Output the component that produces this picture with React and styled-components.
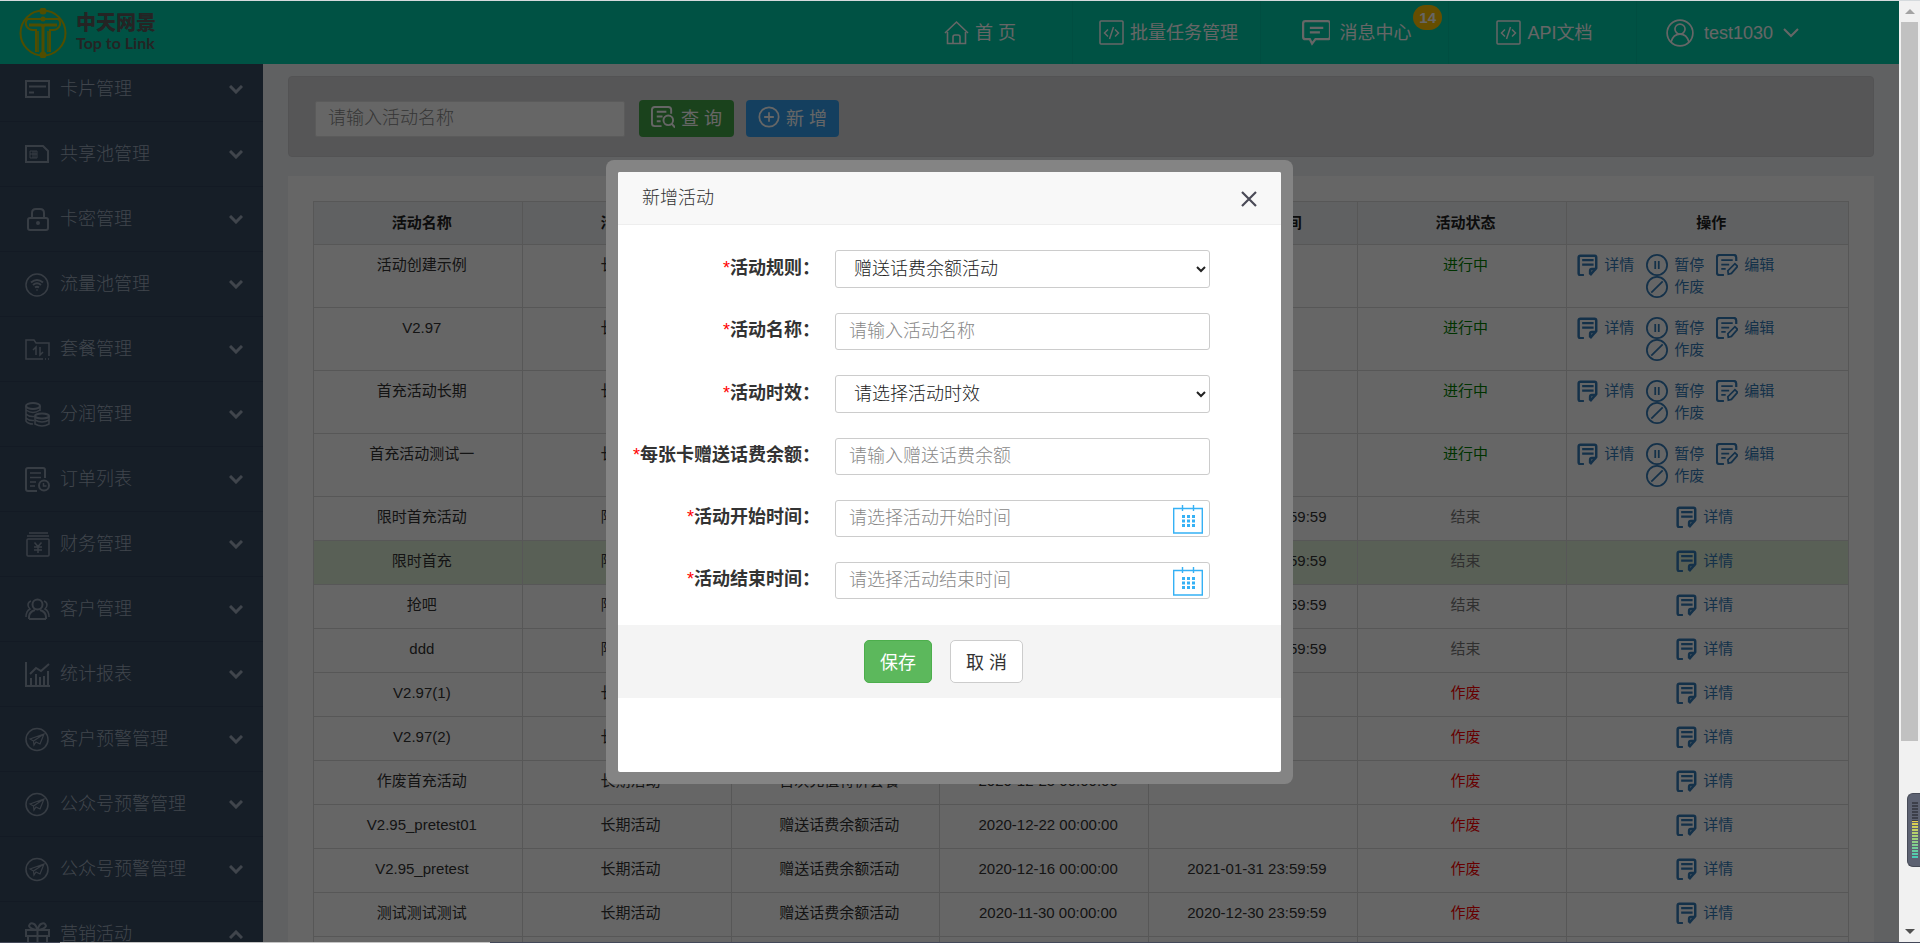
import React from 'react'
import styled, { createGlobalStyle } from 'styled-components'

const menus = [
  { name: '卡片管理', icon: 'card' },
  { name: '共享池管理', icon: 'sim' },
  { name: '卡密管理', icon: 'lock' },
  { name: '流量池管理', icon: 'wifi' },
  { name: '套餐管理', icon: 'folder' },
  { name: '分润管理', icon: 'coins' },
  { name: '订单列表', icon: 'order' },
  { name: '财务管理', icon: 'money' },
  { name: '客户管理', icon: 'users' },
  { name: '统计报表', icon: 'chart' },
  { name: '客户预警管理', icon: 'plane' },
  { name: '公众号预警管理', icon: 'plane' },
  { name: '公众号预警管理', icon: 'plane' },
  { name: '营销活动', icon: 'gift', open: true },
]

const columns = ['活动名称', '活动类型', '活动规则', '活动开始时间', '活动结束时间', '活动状态', '操作']

const GIVE = '赠送话费余额活动'
const FIRST = '首次充值特价套餐'

const rows = [
  ['活动创建示例', '长期活动', GIVE, '2021-01-20 00:00:00', '', '进行中'],
  ['V2.97', '长期活动', GIVE, '2021-01-18 00:00:00', '', '进行中'],
  ['首充活动长期', '长期活动', FIRST, '2021-01-12 00:00:00', '', '进行中'],
  ['首充活动测试一', '长期活动', FIRST, '2021-01-08 00:00:00', '', '进行中'],
  ['限时首充活动', '限时活动', FIRST, '2021-01-06 00:00:00', '2021-01-10 23:59:59', '结束'],
  ['限时首充', '限时活动', FIRST, '2021-01-05 00:00:00', '2021-01-08 23:59:59', '结束'],
  ['抢吧', '限时活动', FIRST, '2020-12-30 00:00:00', '2020-12-31 23:59:59', '结束'],
  ['ddd', '限时活动', FIRST, '2020-12-28 00:00:00', '2020-12-30 23:59:59', '结束'],
  ['V2.97(1)', '长期活动', GIVE, '2020-12-28 00:00:00', '', '作废'],
  ['V2.97(2)', '长期活动', GIVE, '2020-12-28 00:00:00', '', '作废'],
  ['作废首充活动', '长期活动', FIRST, '2020-12-25 00:00:00', '', '作废'],
  ['V2.95_pretest01', '长期活动', GIVE, '2020-12-22 00:00:00', '', '作废'],
  ['V2.95_pretest', '长期活动', GIVE, '2020-12-16 00:00:00', '2021-01-31 23:59:59', '作废'],
  ['测试测试测试', '长期活动', GIVE, '2020-11-30 00:00:00', '2020-12-30 23:59:59', '作废'],
  ['测试活动', '长期活动', GIVE, '2020-11-27 00:00:00', '2020-12-30 23:59:59', '作废'],
]

const statusColor = { 进行中: 'green', 结束: '#777', 作废: 'red' }

const shapes = {
  card: (
    <>
      <rect x='1' y='4' width='23' height='16' />
      <path d='M4 9.5h17M4 15.5h5' />
    </>
  ),
  sim: (
    <>
      <path d='M1 4h17l5 5v11H1z' />
      <path d='M5 9h7v7H5zM8 9v7M10 9v7M5 12h7' strokeWidth='1' />
    </>
  ),
  lock: (
    <>
      <rect x='3' y='11' width='20' height='12' rx='2' />
      <path d='M7 11V6q0-4 4-4h4q4 0 4 4v5' />
      <circle cx='13' cy='16' r='1' fill='currentColor' />
    </>
  ),
  wifi: (
    <>
      <circle cx='12' cy='13' r='11' strokeWidth='1.5' />
      <path d='M6 10.5q6-5 12 0M8 13q4-3.5 8 0M10 15.500q2-1.500 4 0M12 17.500v1' />
    </>
  ),
  folder: (
    <>
      <path d='M18 22H1V3h8l2 3h13v13M20 22h1M23 22h1' strokeWidth='1.5' />
      <path d='M11 18v-8l-3 3M15 10v8l3-3' strokeWidth='1.5' />
    </>
  ),
  coins: (
    <>
      <ellipse cx='8' cy='4' rx='7' ry='3' />
      <path d='M1 4v15q2 3 7 3M15 4v5M1 8q7 5 14 0M1 12q3 3 8 2.500M1 16q3 3 8 2.500' strokeWidth='1.500' />
      <ellipse cx='17' cy='14' rx='7' ry='2.500' />
      <path d='M10 14v8q7 4 14 0v-8M10 18q7 4 14 0' strokeWidth='1.500' />
    </>
  ),
  order: (
    <>
      <path d='M12 24H3q-2 0-2-2V3q0-2 2-2h15q2 0 2 2v8' />
      <path d='M5 6h11M5 10.500h11M5 15h6M5 19h5' strokeWidth='1.500' />
      <circle cx='19' cy='18.500' r='5' />
      <path d='M18.500 16v3h3' strokeWidth='1.500' />
    </>
  ),
  money: (
    <>
      <path d='M4 1h19M2 4h22' strokeWidth='1.500' />
      <rect x='2' y='7' width='22' height='17' rx='1' strokeWidth='1.500' />
      <path d='M9.500 10.500l3.500 4 3.500-4M13 14.500V21M9 15h8M9 18h8' strokeWidth='1.500' />
    </>
  ),
  users: (
    <>
      <circle cx='12.500' cy='7.500' r='5' />
      <path d='M4 22v-2q0-5 6-7M21 22v-2q0-5-6-7M4 22h17' />
      <path d='M6 4q-3 1-3 4 0 2 2 4-4 2-4 8M19 4q3 1 3 4 0 2-2 4 4 2 4 8' strokeWidth='1.500' />
    </>
  ),
  chart: (
    <>
      <path d='M1 0v24h24' />
      <path d='M6 23v-7M11 23V12M15 23v-8M19 23v-9M23 23V9' />
      <path d='M5 12l6-6 5 3 8-7' />
    </>
  ),
  plane: (
    <>
      <circle cx='12' cy='12.500' r='11' strokeWidth='1.500' />
      <path d='M5 12l14-5-4 10-4-2-2 3-.5-4zM8.500 14L19 7' strokeWidth='1.200' />
    </>
  ),
  gift: (
    <>
      <path d='M1 8h23v6H1zM3 14v10h19V14M12.500 8v16' />
      <path d='M12.500 8Q5 7 4 4q1-4 5-2 2 1 3.500 6Q14 3 16 2q4-2 5 2-1 3-8.500 4' />
    </>
  ),
  home: (
    <>
      <path d='M1 13L12.500 2 24 13' strokeWidth='1.600' />
      <path d='M3.500 12v11.500h18V12M9 23v-6q0-2 2-2h3q2 0 2 2v6' strokeWidth='1.600' />
    </>
  ),
  code: (
    <>
      <rect x='1' y='1' width='23' height='23' rx='1' strokeWidth='1.500' />
      <path d='M9 9.500L5.500 13 9 16.500M16 9.500l3.500 3.500-3.500 3.500M14.500 7l-4 12' strokeWidth='1.500' />
    </>
  ),
  message: (
    <>
      <path d='M3 2h20q2 0 2 2v12q0 2-2 2H12l-3 4-2-4H3q-2 0-2-2V4q0-2 2-2z' />
      <path d='M7 8h12M7 12h9' />
    </>
  ),
  person: (
    <>
      <circle cx='12.500' cy='12.500' r='11.500' strokeWidth='1.500' />
      <circle cx='12.500' cy='9' r='4.500' strokeWidth='1.500' />
      <path d='M4.500 20.500q2-7 8-7t8 7' strokeWidth='1.500' />
    </>
  ),
  query: (
    <>
      <path d='M11 22H4q-3 0-3-3V5q0-3 3-3h14q3 0 3 3v4' />
      <path d='M6 7h10M6 12h6M6 17h4' />
      <circle cx='18' cy='16' r='5' />
      <path d='M21.500 19.500l3.500 4' />
    </>
  ),
  plus: (
    <>
      <circle cx='12.500' cy='12.500' r='11' />
      <path d='M12.500 7v11M7 12.500h11' />
    </>
  ),
  detail: (
    <>
      <path d='M9 24H5q-2 0-2-2V4q0-2 2-2h16q2 0 2 2v12l-7 8' strokeWidth='2.800' />
      <path d='M7 7h13M7 12h13' strokeWidth='2.500' />
      <path d='M16 23v-4q0-2 2-2h5' strokeWidth='2.800' />
    </>
  ),
  pause: (
    <>
      <circle cx='12.500' cy='12.500' r='11.500' />
      <path d='M10.500 8v9M14.500 8v9' />
    </>
  ),
  edit: (
    <>
      <path d='M9 24H4q-3 0-3-3V4q0-3 3-3h16q3 0 3 3v4' strokeWidth='2.500' />
      <path d='M6 7h13M6 12h9M6 17h5' />
      <path d='M14 23l-.5-4 8-8 3 3-7 8z' />
    </>
  ),
  ban: (
    <>
      <circle cx='12.500' cy='12.500' r='11.500' />
      <path d='M6 19L19 6' />
    </>
  ),
}

function Icon({ name, size = 25 }) {
  return (
    <Svg width={size} height={size} viewBox='0 0 25 25' aria-hidden='true'>
      {shapes[name]}
    </Svg>
  )
}

function Logo() {
  return (
    <Brand href='#'>
      <Svg width='50' height='50' viewBox='0 0 50 50' aria-hidden='true'>
        <circle cx='25' cy='25' r='22.500' />
        <circle cx='25' cy='3' r='2.500' fill='currentColor' />
        <circle cx='25' cy='47' r='2.500' fill='currentColor' />
        <circle cx='25' cy='11' r='1.500' fill='currentColor' />
        <path d='M7 11h36M10 11q-4 3-1 8 2 3 6 3h3v22M40 11q4 3 1 8-2 3-6 3h-3v22' />
        <path d='M11 17h12q2 0 2 3v24M39 17H27q-2 0-2 3' strokeWidth='3' />
        <path d='M20 44V23M30 44V23' strokeWidth='1.500' />
      </Svg>
      <BrandText>
        <strong>中天网景</strong>
        <span>Top to Link</span>
      </BrandText>
    </Brand>
  )
}

function Calendar() {
  return (
    <CalendarSvg width='30' height='30' viewBox='0 0 30 30' aria-hidden='true'>
      <path d='M.7 4.500h28.600v24.500H.7z' />
      <path d='M9.500 1v6M20.500 1v6' />
      {[12, 16.500, 21].map(y =>
        [10, 15, 20].map(x => <rect key={x + '-' + y} x={x - 1} y={y - 1} width='3' height='3' />)
      )}
    </CalendarSvg>
  )
}

function Action({ icon, children }) {
  return (
    <ActionLink href='#'>
      <Icon name={icon} size={22} />
      {children}
    </ActionLink>
  )
}

function Header() {
  return (
    <Top>
      <Logo />
      <Nav>
        <NavItem href='#'><Icon name='home' />首 页</NavItem>
        <NavItem href='#'><Icon name='code' />批量任务管理</NavItem>
        <NavItem href='#' $gap={10}>
          <Icon name='message' size={28} />
          消息中心
          <Badge>14</Badge>
        </NavItem>
        <NavItem href='#'><Icon name='code' />API文档</NavItem>
        <NavItem href='#' $gap={10}>
          <Icon name='person' size={28} />
          test1030
          <Svg width='16' height='10' viewBox='0 0 16 10' aria-hidden='true'>
            <path d='M1 1l7 7 7-7' />
          </Svg>
        </NavItem>
      </Nav>
    </Top>
  )
}

function Sidebar() {
  return (
    <Side>
      <MenuList>
        {menus.map((m, i) => (
          <li key={i}>
            <MenuLink href='#'>
              <MenuIcon><Icon name={m.icon} /></MenuIcon>
              {m.name}
              <Arrow width='14' height='9' viewBox='0 0 14 9' aria-hidden='true'>
                <path d={m.open ? 'M1 8l6-6 6 6' : 'M1 1l6 6 6-6'} />
              </Arrow>
            </MenuLink>
          </li>
        ))}
      </MenuList>
    </Side>
  )
}

function ActivityTable() {
  return (
    <Table>
      <colgroup>
        {columns.slice(0, 6).map(c => <NormalCol key={c} />)}
        <col />
      </colgroup>
      <thead>
        <tr>{columns.map(c => <th key={c}>{c}</th>)}</tr>
      </thead>
      <tbody>
        {rows.map((row, i) => {
          const running = row[5] === '进行中'
          return (
            <Row key={row[0]} $active={i === 5}>
              {row.slice(0, 5).map((text, j) => <td key={j}>{text}</td>)}
              <td><Status $color={statusColor[row[5]]}>{row[5]}</Status></td>
              <ActionCell>
                <Actions $multi={running}>
                  <Action icon='detail'>详情</Action>
                  {running && <Action icon='pause'>暂停</Action>}
                  {running && <Action icon='edit'>编辑</Action>}
                  {running && <Action icon='ban'>作废</Action>}
                </Actions>
              </ActionCell>
            </Row>
          )
        })}
      </tbody>
    </Table>
  )
}

function Field({ id, label, children }) {
  return (
    <FieldRow>
      <Label htmlFor={id}><i>*</i>{label}：</Label>
      <Control>{children}</Control>
    </FieldRow>
  )
}

function ActivityDialog() {
  return (
    <Dialog role='dialog' aria-labelledby='dialog-title'>
      <DialogInner>
        <DialogHead>
          <h2 id='dialog-title'>新增活动</h2>
          <Close type='button' aria-label='关闭'>
            <svg width='16' height='16' viewBox='0 0 16 16' aria-hidden='true'>
              <path d='M1 1l14 14M15 1L1 15' stroke='#4a4a57' strokeWidth='2.200' />
            </svg>
          </Close>
        </DialogHead>
        <Form>
          <Field id='rule' label='活动规则'>
            <Select id='rule'><option>赠送话费余额活动</option></Select>
          </Field>
          <Field id='name' label='活动名称'>
            <Input id='name' placeholder='请输入活动名称' />
          </Field>
          <Field id='term' label='活动时效'>
            <Select id='term'><option>请选择活动时效</option></Select>
          </Field>
          <Field id='amount' label='每张卡赠送话费余额'>
            <Input id='amount' placeholder='请输入赠送话费余额' />
          </Field>
          <Field id='start' label='活动开始时间'>
            <Input id='start' placeholder='请选择活动开始时间' />
            <Calendar />
          </Field>
          <Field id='end' label='活动结束时间'>
            <Input id='end' placeholder='请选择活动结束时间' />
            <Calendar />
          </Field>
        </Form>
        <DialogFoot>
          <DialogButton type='button' $primary>保存</DialogButton>
          <DialogButton type='button'>取 消</DialogButton>
        </DialogFoot>
      </DialogInner>
    </Dialog>
  )
}

function App() {
  return (
    <Shell>
      <GlobalStyle />
      <Window>
        <Page>
          <Header />
          <Body>
            <Sidebar />
            <Main>
              <SearchBar>
                <SearchInput placeholder='请输入活动名称' aria-label='活动名称' />
                <ToolButton type='button' $color='#43a547'><Icon name='query' size={24} />查 询</ToolButton>
                <ToolButton type='button' $color='#339fee'><Icon name='plus' size={22} />新 增</ToolButton>
              </SearchBar>
              <Card>
                <ActivityTable />
              </Card>
            </Main>
          </Body>
          <Mask>
            <ActivityDialog />
          </Mask>
        </Page>
        <ScrollBar>
          <ScrollArrow />
          <Track><Thumb /></Track>
          <ScrollArrow $down />
        </ScrollBar>
      </Window>
      <BottomLine><span /></BottomLine>
      <Meter><Level /></Meter>
    </Shell>
  )
}

const GlobalStyle = createGlobalStyle`
  *{
    box-sizing: border-box;
  }

  body{
    margin: 0;
    overflow: hidden;
    color: #333;
    font-family: "Liberation Sans", "Noto Sans CJK SC", sans-serif;
    font-size: 15px;
    line-height: 22px;
  }

  a{
    text-decoration: none;
  }

  input, select, button{
    font-family: inherit;
    font-size: 18px;
  }
`

const Svg = styled.svg`
  flex: none;
  fill: none;
  stroke: currentColor;
  stroke-width: 2;
`

const Shell = styled.div`
  display: flex;
  flex-direction: column;
  height: 100vh;
  border-top: 1px solid #d5dadd;
`

const Window = styled.div`
  display: flex;
  flex: 1;
  min-height: 0;
`

const Page = styled.div`
  position: relative;
  display: flex;
  flex-direction: column;
  flex: 1;
  min-width: 0;
  overflow: hidden;
  background: #f0f2f5;
`

const Top = styled.header`
  display: flex;
  justify-content: space-between;
  flex: none;
  height: 63px;
  padding-right: 75px;
  background: #00cdaa;
`

const Brand = styled.a`
  display: flex;
  align-items: center;
  gap: 8px;
  padding-left: 18px;
  color: #c8c000;
`

const BrandText = styled.span`
  display: flex;
  flex-direction: column;
  color: #5a5a5a;

  strong{
    font-size: 20px;
    font-weight: 900;
    line-height: 20px;
  }

  span{
    font-family: Lato, sans-serif;
    font-size: 16px;
    font-weight: 700;
    line-height: 20px;
  }
`

const Nav = styled.nav`
  display: flex;
`

const NavItem = styled.a`
  position: relative;
  display: flex;
  align-items: center;
  justify-content: center;
  gap: ${p => p.$gap || 6}px;
  width: 188px;
  padding-left: 4px;
  color: #fff;
  font-size: 18px;

  & + &{
    border-left: 1px solid #00c4a2;
  }
`

const Badge = styled.span`
  position: absolute;
  top: 4px;
  right: 6px;
  padding: 0 6px;
  border-radius: 13px;
  background: #ffc400;
  font-size: 15px;
  font-weight: bold;
  line-height: 25px;
`

const Body = styled.div`
  display: flex;
  flex: 1;
  min-height: 0;
`

const Side = styled.aside`
  flex: none;
  width: 263px;
  overflow: hidden;
  background: #374b62;
`

const MenuList = styled.ul`
  margin: -7px 0 0;
  padding: 0;
  list-style: none;
`

const MenuLink = styled.a`
  display: flex;
  align-items: center;
  height: 65px;
  padding: 0 20px 0 25px;
  border-bottom: 1px solid #30425a;
  color: #a0adbe;
  font-size: 18px;
  font-weight: 300;
`

const MenuIcon = styled.span`
  display: flex;
  margin-right: 10px;
  color: #8a98aa;
`

const Arrow = styled.svg`
  margin-left: auto;
  fill: none;
  stroke: #a0adbe;
  stroke-width: 3;
`

const Main = styled.main`
  display: flex;
  flex-direction: column;
  flex: 1;
  min-width: 0;
  padding: 12px 25px 0;
  overflow: hidden;
`

const SearchBar = styled.div`
  display: flex;
  align-items: center;
  gap: 12px;
  flex: none;
  padding: 23px 26px 19px;
  border: 1px solid #d0d0d3;
  border-radius: 4px;
  background: #d8d8da;
`

const SearchInput = styled.input`
  width: 310px;
  height: 36px;
  margin-right: 2px;
  padding: 0 12px;
  border: 1px solid #e4e4e4;
  border-radius: 2px;
  background: #fff;
  font-weight: 300;

  &::placeholder{
    color: #888;
  }
`

const ToolButton = styled.button`
  display: flex;
  align-items: center;
  gap: 6px;
  height: 37px;
  padding: 0 12px 3px;
  border: 0;
  border-radius: 4px;
  background: ${p => p.$color};
  color: #fff;
`

const Card = styled.section`
  flex: none;
  margin-top: 19px;
  padding: 25px;
  background: #fff;
`

const Table = styled.table`
  width: 100%;
  border-collapse: collapse;
  table-layout: fixed;
  text-align: center;

  th, td{
    padding: 9px 5px 9px 13px;
    border: 1px solid #d9d9d9;
    vertical-align: top;
  }

  th{
    padding-top: 10px;
    padding-bottom: 10px;
    background: #f0f2f5;
    color: #222;
  }

  td{
    height: 44px;
  }
`

const NormalCol = styled.col`
  width: 13.6%;
`

const Row = styled.tr`
  background: ${p => p.$active ? '#dff0d8' : '#fff'};
`

const Status = styled.span`
  color: ${p => p.$color};
`

const ActionCell = styled.td`
  && {
    padding: 9px 12px 9px 6px;
  }
`

const Actions = styled.div`
  display: flex;
  flex-wrap: wrap;
  justify-content: center;
  column-gap: 12px;
  width: ${p => p.$multi ? '78%' : '100%'};
`

const ActionLink = styled.a`
  display: flex;
  align-items: center;
  gap: 6px;
  color: #337ab7;
`

const Mask = styled.div`
  position: absolute;
  inset: 0;
  padding-top: 159px;
  background: rgba(0, 0, 0, .6);
`

const Dialog = styled.div`
  width: 37%;
  min-width: 660px;
  max-width: 687px;
  margin: 0 auto;
  padding: 12px;
  border-radius: 8px;
  background: #848484;
`

const DialogInner = styled.div`
  padding-bottom: 74px;
  border-radius: 2px;
  background: #fff;
  overflow: hidden;
`

const DialogHead = styled.div`
  display: flex;
  align-items: center;
  justify-content: space-between;
  height: 53px;
  padding: 0 24px;
  border-bottom: 1px solid #eee;
  background: #f8f8f8;

  h2{
    margin: 0;
    font-size: 18px;
    font-weight: 300;
  }
`

const Close = styled.button`
  display: flex;
  padding: 2px 0 0;
  border: 0;
  background: none;
`

const Form = styled.form`
  display: flex;
  flex-direction: column;
  gap: 25px;
  padding: 25px 71px 26px 0;
`

const FieldRow = styled.div`
  display: flex;
  align-items: center;
  justify-content: flex-end;
  gap: 15px;
`

const Label = styled.label`
  padding-bottom: 3px;
  font-size: 18px;
  font-weight: bold;

  i{
    color: red;
    font-style: normal;
    font-weight: normal;
  }
`

const Control = styled.div`
  position: relative;
  display: flex;
  width: 375px;
`

const Input = styled.input`
  width: 100%;
  height: 37px;
  padding: 0 13px;
  border: 1px solid #ccc;
  border-radius: 3px;
  background: #fff;
  font-weight: 300;

  &::placeholder{
    color: #888;
  }
`

const Select = styled.select`
  width: 100%;
  height: 38px;
  padding: 0 0 0 14px;
  border: 1px solid #ccc;
  border-radius: 3px;
  background: #fff;
  color: #222;
  font-weight: 300;
`

const CalendarSvg = styled.svg`
  position: absolute;
  top: 4px;
  right: 7px;
  fill: none;
  stroke: #35b1f5;
  stroke-width: 1.4;

  rect{
    fill: #35b1f5;
    stroke: none;
  }
`

const DialogFoot = styled.div`
  display: flex;
  justify-content: center;
  gap: 18px;
  padding: 15px 12px 15px 0;
  background: #f4f4f4;
`

const DialogButton = styled.button`
  height: 43px;
  padding: 0 15px 2px;
  border: 1px solid ${p => p.$primary ? '#4cae4c' : '#ccc'};
  border-radius: 5px;
  background: ${p => p.$primary ? '#5cb85c' : '#fff'};
  color: ${p => p.$primary ? '#fff' : '#333'};
`

const ScrollBar = styled.div`
  display: flex;
  flex-direction: column;
  flex: none;
  width: 21px;
  background: #f1f1f1;
`

const ScrollArrow = styled.div`
  display: flex;
  align-items: center;
  justify-content: center;
  height: 21px;

  &::before{
    content: '';
    border: 5px solid transparent;
    border-top-width: ${p => p.$down ? 5 : 0}px;
    border-bottom-width: ${p => p.$down ? 0 : 5}px;
    border-top-color: #505050;
    border-bottom-color: #a3a3a3;
  }
`

const Track = styled.div`
  flex: 1;
  padding: 0 2px;
`

const Thumb = styled.div`
  height: 80%;
  background: #c1c1c1;
`

const BottomLine = styled.div`
  flex: none;
  height: 1px;
  padding-left: 60px;
  background: #434858;

  span{
    display: block;
    width: 430px;
    height: 1px;
    background: #c4c4c4;
  }
`

const Meter = styled.div`
  position: fixed;
  right: 0;
  bottom: 76px;
  width: 13px;
  height: 74px;
  padding: 8px 2px 8px 4px;
  border: 1px solid #474b57;
  border-right: 0;
  border-radius: 6px 0 0 6px;
  background: #5d6272;
`

const Level = styled.div`
  height: 100%;
  background:
    repeating-linear-gradient(transparent 0 2px, #5d6272 2px 3px),
    linear-gradient(#3c3f4a 0 34%, #e8cf4a 34%, #9fd07a 65%, #45cdb8);
`

export default App
